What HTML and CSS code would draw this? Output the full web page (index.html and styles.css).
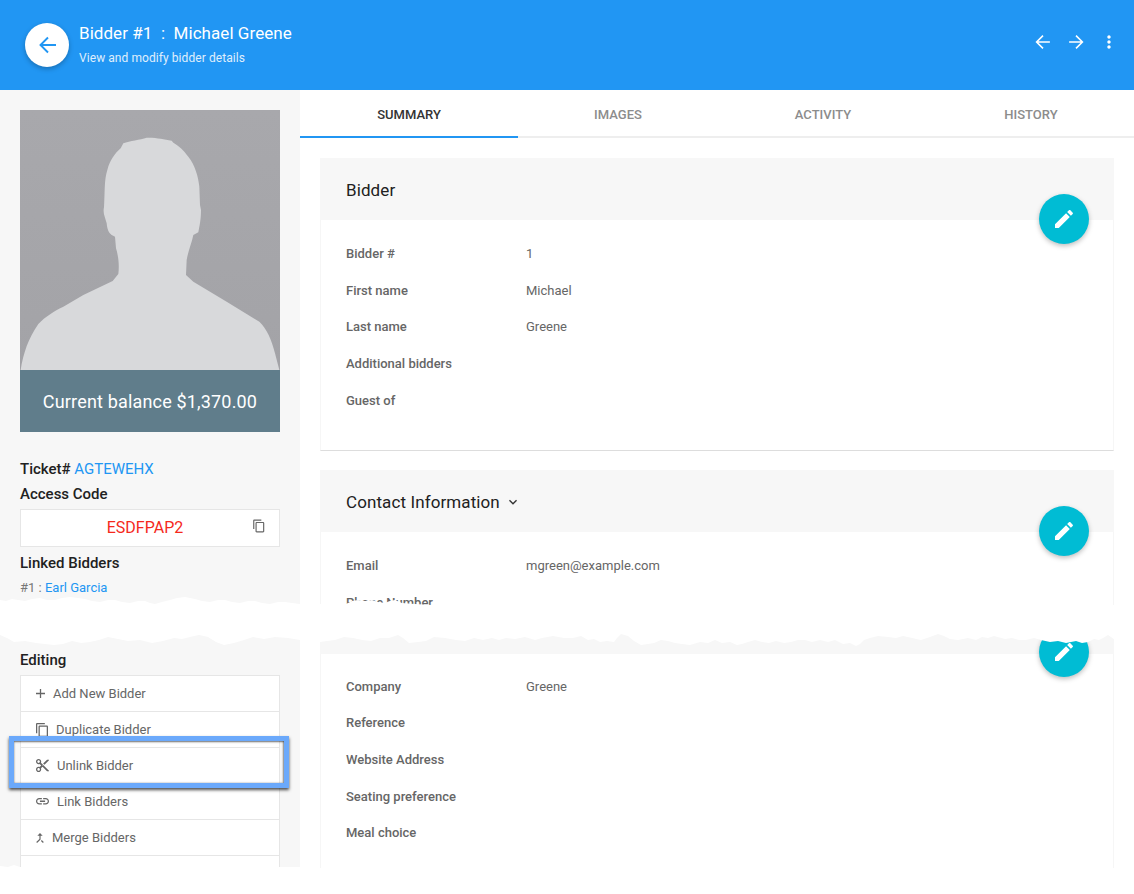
FILE: index.html
```html
<!DOCTYPE html>
<html>
<head>
    <title>Bidder #1 : Michael Greene</title>
    <link rel="stylesheet" href="styles.css">
</head>
<body>
<div class="page">
    <!-- Header -->
    <header class="topbar">
        <button class="back-btn" aria-label="Back">
            <svg viewBox="0 0 24 24" width="24" height="24"><path class="thin" d="M21 12H5.5M13 4.5 5.5 12l7.5 7.5"/></svg>
        </button>
        <div class="topbar-text">
            <h1>Bidder #1 &nbsp;:&nbsp; Michael Greene</h1>
            <p>View and modify bidder details</p>
        </div>
        <div class="topbar-actions">
            <svg viewBox="0 0 24 24" width="22" height="22"><path class="thin" d="M19.5 12H5M12 5l-7 7 7 7"/></svg>
            <svg viewBox="0 0 24 24" width="22" height="22"><path class="thin" d="M4.5 12H19M12 5l7 7-7 7"/></svg>
            <svg class="more" viewBox="0 0 24 24" width="20" height="20"><path class="fill" d="M12 8c1.1 0 2-.9 2-2s-.9-2-2-2-2 .9-2 2 .9 2 2 2zm0 2c-1.1 0-2 .9-2 2s.9 2 2 2 2-.9 2-2-.9-2-2-2zm0 6c-1.1 0-2 .9-2 2s.9 2 2 2 2-.9 2-2-.9-2-2-2z"/></svg>
        </div>
    </header>

    <div class="layout">
        <!-- Sidebar -->
        <aside class="sidebar">
            <div class="photo">
                <svg viewBox="60 30 780 780" width="260" height="260">
                    <defs>
                        <linearGradient id="photoBg" x1="0" y1="0" x2="0" y2="1">
                            <stop offset="0" stop-color="#a8a8ac"/>
                            <stop offset="1" stop-color="#a3a3a7"/>
                        </linearGradient>
                    </defs>
                    <rect x="60" y="30" width="780" height="780" fill="url(#photoBg)"/>
                    <path fill="#d8d9db" d="M62 810C70 760 85 715 115 672 135 650 165 632 190 620L250 585 338 543 355 522C358 500 356 470 348 445L345 410C330 405 322 395 320 370 315 350 308 340 312 322 315 280 312 240 322 210 330 180 345 160 362 145L370 130C390 122 420 120 440 113 470 112 490 118 515 122L520 128C540 140 550 150 565 170 585 195 595 230 598 260L600 315 603 330C603 360 598 380 595 397L580 405C575 430 565 450 560 480L558 525 580 545 680 605 778 665C800 685 815 720 825 760L838 810Z"/>
                </svg>
            </div>
            <div class="balance">Current balance $1,370.00</div>

            <div class="side-label ticket">Ticket# <a href="#">AGTEWEHX</a></div>
            <div class="side-label access">Access Code</div>
            <div class="code-box">
                <span>ESDFPAP2</span>
                <svg class="code-copy" viewBox="0 0 24 24" width="14" height="14"><path d="M16 1H4c-1.1 0-2 .9-2 2v14h2V3h12V1zm3 4H8c-1.1 0-2 .9-2 2v14c0 1.1.9 2 2 2h11c1.1 0 2-.9 2-2V7c0-1.1-.9-2-2-2zm0 16H8V7h11v14z"/></svg>
            </div>
            <div class="side-label linked">Linked Bidders</div>
            <div class="linked-item">#1 : <a href="#">Earl Garcia</a></div>

            <div class="side-label editing">Editing</div>
            <ul class="action-list">
                <li>
                    <svg viewBox="5 5 14 14" width="9" height="9"><path d="M19 13h-6v6h-2v-6H5v-2h6V5h2v6h6v2z"/></svg>
                    Add New Bidder
                </li>
                <li>
                    <svg viewBox="2 1 19 22" width="12" height="14"><path d="M16 1H4c-1.1 0-2 .9-2 2v14h2V3h12V1zm3 4H8c-1.1 0-2 .9-2 2v14c0 1.1.9 2 2 2h11c1.1 0 2-.9 2-2V7c0-1.1-.9-2-2-2zm0 16H8V7h11v14z"/></svg>
                    Duplicate Bidder
                </li>
                <li class="is-marked">
                    <svg viewBox="2 2 20 20" width="13" height="13"><path d="M9.64 7.64c.23-.5.36-1.05.36-1.64 0-2.21-1.79-4-4-4S2 3.79 2 6s1.79 4 4 4c.59 0 1.14-.13 1.64-.36L10 12l-2.36 2.36C7.14 14.13 6.59 14 6 14c-2.21 0-4 1.79-4 4s1.79 4 4 4 4-1.79 4-4c0-.59-.13-1.14-.36-1.64L12 14l7 7h3v-1L9.64 7.64zM6 8c-1.1 0-2-.89-2-2s.9-2 2-2 2 .89 2 2-.9 2-2 2zm0 12c-1.1 0-2-.89-2-2s.9-2 2-2 2 .89 2 2-.9 2-2 2zm6-7.5c-.28 0-.5-.22-.5-.5s.22-.5.5-.5.5.22.5.5-.22.5-.5.5zM19 3l-6 6 2 2 7-7V3z"/></svg>
                    Unlink Bidder
                    <div class="marker"></div>
                </li>
                <li>
                    <svg viewBox="2 7 20 10" width="13" height="6.5"><path d="M3.9 12c0-1.71 1.39-3.1 3.1-3.1h4V7H7c-2.76 0-5 2.24-5 5s2.24 5 5 5h4v-1.9H7c-1.71 0-3.1-1.39-3.1-3.1zM8 13h8v-2H8v2zm9-6h-4v1.9h4c1.71 0 3.1 1.39 3.1 3.1s-1.39 3.1-3.1 3.1h-4V17h4c2.76 0 5-2.24 5-5s-2.24-5-5-5z"/></svg>
                    Link Bidders
                </li>
                <li>
                    <svg viewBox="5.5 3.5 13 17" width="8" height="10"><path d="M17 20.41L18.41 19 15 15.59 13.59 17 17 20.41zM7.5 8H11v5.59L5.59 19 7 20.41l6-6V8h3.5L12 3.5 7.5 8z"/></svg>
                    Merge Bidders
                </li>
                <li>Remove Bidder</li>
            </ul>
        </aside>

        <!-- Main -->
        <main class="main">
            <nav class="tabs">
                <a class="tab active" href="#">Summary</a>
                <a class="tab" href="#">Images</a>
                <a class="tab" href="#">Activity</a>
                <a class="tab" href="#">History</a>
            </nav>

            <div class="content">
                <section class="card card-first">
                    <div class="card-head">
                        <h2>Bidder</h2>
                        <button class="fab" aria-label="Edit"><svg viewBox="0 0 24 24" width="24" height="24"><path d="M3 17.25V21h3.75L17.81 9.94l-3.75-3.75L3 17.25zM20.71 7.04c.39-.39.39-1.02 0-1.41l-2.34-2.34c-.39-.39-1.02-.39-1.41 0l-1.83 1.83 3.75 3.75 1.83-1.83z"/></svg></button>
                    </div>
                    <dl class="fields">
                        <div class="field"><dt>Bidder #</dt><dd>1</dd></div>
                        <div class="field"><dt>First name</dt><dd>Michael</dd></div>
                        <div class="field"><dt>Last name</dt><dd>Greene</dd></div>
                        <div class="field"><dt>Additional bidders</dt><dd></dd></div>
                        <div class="field"><dt>Guest of</dt><dd></dd></div>
                    </dl>
                </section>

                <section class="card card-contact">
                    <div class="card-head">
                        <h2>Contact Information</h2>
                        <svg class="chevron" viewBox="0 0 24 24" width="16" height="16"><path d="M7.41 8.59L12 13.17l4.59-4.58L18 10l-6 6-6-6 1.41-1.41z"/></svg>
                        <button class="fab" aria-label="Edit"><svg viewBox="0 0 24 24" width="24" height="24"><path d="M3 17.25V21h3.75L17.81 9.94l-3.75-3.75L3 17.25zM20.71 7.04c.39-.39.39-1.02 0-1.41l-2.34-2.34c-.39-.39-1.02-.39-1.41 0l-1.83 1.83 3.75 3.75 1.83-1.83z"/></svg></button>
                    </div>
                    <dl class="fields">
                        <div class="field"><dt>Email</dt><dd>mgreen@example.com</dd></div>
                        <div class="field"><dt>Phone Number</dt><dd></dd></div>
                    </dl>
                </section>

                <section class="card card-other">
                    <div class="card-head">
                        <button class="fab" aria-label="Edit"><svg viewBox="0 0 24 24" width="24" height="24"><path d="M3 17.25V21h3.75L17.81 9.94l-3.75-3.75L3 17.25zM20.71 7.04c.39-.39.39-1.02 0-1.41l-2.34-2.34c-.39-.39-1.02-.39-1.41 0l-1.83 1.83 3.75 3.75 1.83-1.83z"/></svg></button>
                    </div>
                    <dl class="fields">
                        <div class="field"><dt>Company</dt><dd>Greene</dd></div>
                        <div class="field"><dt>Reference</dt><dd></dd></div>
                        <div class="field"><dt>Website Address</dt><dd></dd></div>
                        <div class="field"><dt>Seating preference</dt><dd></dd></div>
                        <div class="field"><dt>Meal choice</dt><dd></dd></div>
                    </dl>
                </section>
            </div>
        </main>
    </div>

    <!-- Torn paper edges lying over the page -->
    <svg class="tear" viewBox="0 590 1134 304" width="1134" height="304">
        <polygon points="0,600 6,601 12,599 18,600 25,601 32,599 40,598 47,600 55,600 62,598 70,597 78,598 85,599 92,601 100,602 108,600 115,600 122,602 130,603 138,601 145,601 150,603 155,604 162,602 170,600 177,598 185,597 190,598 195,599 202,601 210,602 218,600 225,600 232,602 240,603 248,601 255,601 262,603 270,604 278,602 285,602 292,603 300,604 346,604 352,601 358,600 365,601 372,600 378,602 385,603 390,601 395,600 402,603 415,604 432,605 1134,605 1134,640 1115,640 1111,637 1108,635 1103,638 1099,640 1094,639 1088,642 1082,643 1076,641 1066,643 1058,641 1050,642 1041,640 1034,638 1026,640 1019,640 1012,638 1005,639 994,636 988,638 982,637 976,640 968,638 958,640 950,639 944,636 938,634 930,637 921,640 912,638 903,636 896,638 888,637 878,636 870,638 864,640 860,644 856,646 850,643 843,644 835,640 828,642 820,640 812,642 805,640 798,640 791,642 784,643 776,641 769,643 762,642 755,640 748,642 742,644 737,645 730,642 722,643 715,640 708,643 700,642 690,645 682,644 675,643 668,641 661,640 654,643 648,644 641,645 634,641 628,636 621,634 617,638 614,642 607,641 600,642 594,639 588,640 581,636 573,638 564,638 553,636 542,638 535,640 525,637 515,639 506,638 499,640 492,638 483,640 474,638 465,641 456,640 445,638 434,637 426,641 418,642 409,643 403,638 398,635 389,638 380,638 371,641 362,640 353,638 344,637 335,640 327,641 320,642 310,641 300,640 288,638 275,637 264,639 253,637 244,640 234,643 224,645 216,642 208,637 199,635 190,637 182,639 174,638 163,641 152,643 140,640 128,641 118,639 108,637 99,640 90,642 81,643 72,641 63,644 54,645 45,644 36,643 25,641 14,642 7,638 0,635"/>
        <polygon points="0,866 8,867 14,865 20,867 300,867 302,868 1134,868 1134,894 0,894"/>
    </svg>
</div>
</body>
</html>
```

FILE: styles.css
```css
* {
    box-sizing: border-box;
}

body {
    margin: 0;
    font-family: Roboto, "Liberation Sans", sans-serif;
    background: #fff;
}

a {
    color: #2196f3;
    text-decoration: none;
}

.page {
    position: relative;
    height: 894px;
    overflow: hidden;
}

/* Header */
.topbar {
    display: flex;
    align-items: center;
    height: 90px;
    padding: 0 15px 0 25px;
    background: #2196f3;
    color: #fff;
}
.back-btn {
    display: flex;
    align-items: center;
    justify-content: center;
    width: 44px;
    height: 44px;
    padding: 0;
    border: none;
    border-radius: 50%;
    background: #fff;
    box-shadow: 0 2px 5px rgba(0,0,0,0.26);
}
.back-btn .thin {
    stroke: #2196f3;
    stroke-width: 1.9;
}
.thin {
    fill: none;
    stroke: #fff;
    stroke-width: 1.7;
}
.fill {
    fill: #fff;
}
.topbar-text {
    margin-left: 10px;
    padding-bottom: 4px;
}
.topbar-text h1 {
    margin: 0;
    font-size: 17px;
    font-weight: 400;
    line-height: 24px;
    letter-spacing: 0.05px;
}
.topbar-text p {
    margin: 5px 0 0;
    font-size: 12px;
    line-height: 16px;
    letter-spacing: 0.07px;
    opacity: 0.85;
}
.topbar-actions {
    display: flex;
    align-items: center;
    gap: 11px;
    margin-left: auto;
    margin-top: -6px;
}
.more {
    margin-left: 1.5px;
}

.layout {
    display: flex;
}

/* Sidebar */
.sidebar {
    width: 300px;
    height: 804px;
    padding: 20px;
    background: #f7f7f7;
}
.photo {
    height: 260px;
}
.photo svg {
    display: block;
}
.balance {
    height: 62px;
    padding-top: 1px;
    line-height: 62px;
    background: #607d8b;
    color: #fff;
    font-size: 18px;
    letter-spacing: 0.17px;
    text-align: center;
}
.side-label {
    font-size: 15px;
    font-weight: 500;
    line-height: 24px;
    color: #212121;
}
.ticket {
    margin-top: 25px;
}
.ticket a {
    font-weight: 400;
}
.access {
    margin-top: 1px;
}
.code-box {
    position: relative;
    height: 38px;
    margin-top: 3px;
    padding-right: 10px;
    border: 1px solid #e6e6e6;
    background: #fff;
    color: #f5291c;
    font-size: 16px;
    line-height: 36px;
    text-align: center;
}
.code-copy {
    position: absolute;
    top: 9px;
    right: 13px;
    fill: #666;
}
.linked {
    margin-top: 4px;
}
.linked-item {
    margin-top: 1px;
    font-size: 13px;
    line-height: 24px;
    color: #777;
}
.editing {
    margin-top: 48px;
}
.action-list {
    margin: 3px 0 0;
    padding: 0;
    list-style: none;
    border: 1px solid #e6e6e6;
    border-bottom: none;
    background: #fff;
}
.action-list li {
    position: relative;
    display: flex;
    align-items: center;
    gap: 8px;
    height: 36px;
    padding-left: 15px;
    border-bottom: 1px solid #e6e6e6;
    font-size: 13px;
    color: #666;
}
.action-list svg {
    flex: none;
    fill: #666;
}
.action-list li:last-child {
    padding-left: 31px;
}

/* Annotation box round the Unlink row */
.marker {
    position: absolute;
    top: -12px;
    left: -12px;
    width: 280px;
    height: 52px;
    border: 5px solid #6ba9fb;
    box-shadow: 0 2px 3px rgba(0,0,0,0.7), inset 0 1px 2px rgba(0,0,0,0.5), inset -1px 0 2px rgba(0,0,0,0.35);
}

/* Main */
.main {
    flex: 1;
}
.tabs {
    display: grid;
    grid-template-columns: 218px 200px 210px 206px;
    height: 48px;
    border-bottom: 2px solid #eee;
}
.tab {
    height: 48px;
    padding-top: 1px;
    line-height: 48px;
    font-size: 13px;
    font-weight: 500;
    text-align: center;
    text-transform: uppercase;
    color: #8c8c8c;
}
.tab.active {
    color: #333;
    border-bottom: 2px solid #2196f3;
}
.content {
    padding: 20px 20px 0;
}
.card {
    border: 1px solid #f6f6f6;
    border-top: none;
    background: #fff;
}
.card-head {
    position: relative;
    display: flex;
    align-items: center;
    gap: 5px;
    height: 62px;
    margin: 0 -1px;
    padding: 1px 0 0 26px;
    background: #f7f7f7;
}
.card-head h2 {
    margin: 0;
    font-size: 17px;
    font-weight: 400;
    letter-spacing: 0.1px;
    color: #212121;
}
.chevron {
    fill: #333;
}
.fab {
    position: absolute;
    right: 25px;
    bottom: -24px;
    display: flex;
    align-items: center;
    justify-content: center;
    width: 50px;
    height: 50px;
    padding: 0;
    border: none;
    border-radius: 50%;
    background: #00bcd4;
    box-shadow: 0 2px 5px rgba(0,0,0,0.26);
    fill: #fff;
}
.fields {
    margin: 0;
    padding: 15px 0 0 25px;
}
.field {
    display: flex;
    align-items: center;
    height: 36.7px;
    font-size: 13px;
    color: #666;
}
.field dt {
    width: 180px;
    font-weight: 500;
}
.field dd {
    margin: 0;
}
.card-first {
    height: 293px;
    margin-bottom: 19px;
    border-bottom: 1px solid #ddd;
}
.card-contact {
    height: 150px;
}
.card-other {
    height: 260px;
}
.card-other .card-head {
    height: 34px;
}
.card-other .fab {
    bottom: -23px;
}
.card-other .fields {
    padding-top: 14px;
}
.card-other .field {
    height: 36.6px;
}

/* Tear */
.tear {
    position: absolute;
    left: 0;
    top: 590px;
    fill: #fff;
}
```
